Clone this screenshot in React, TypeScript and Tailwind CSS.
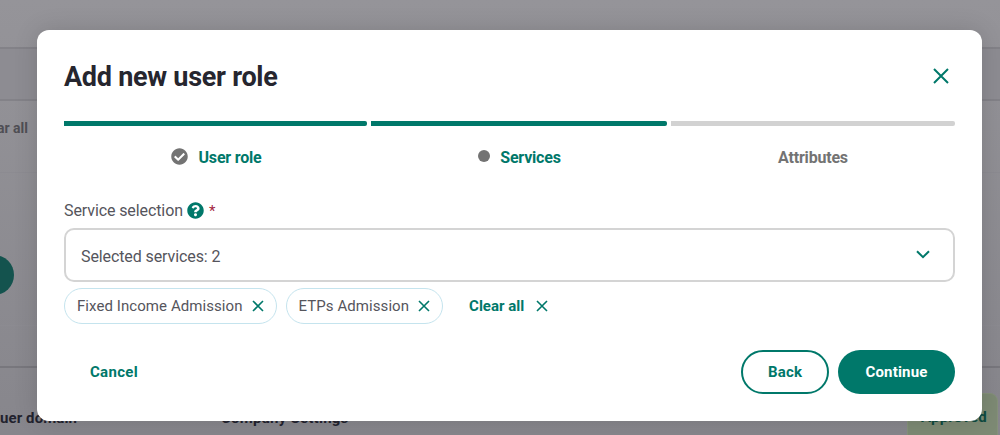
import React from "react";
import { FaCheckCircle, FaQuestionCircle } from "react-icons/fa";

function Cross({ size, width = 1.6 }: { size: number; width?: number }) {
  return (
    <svg className="shrink-0 text-[#00786a]" width={size} height={size} viewBox={`0 0 ${size} ${size}`} aria-hidden="true">
      <path d={`M1 1L${size - 1} ${size - 1}M${size - 1} 1L1 ${size - 1}`} fill="none" stroke="currentColor" strokeWidth={width} />
    </svg>
  );
}

function Chip({ label }: { label: string }) {
  return (
    <div className="flex h-[36px] items-center gap-[9px] rounded-full border border-[#c5e4ee] pl-[12px] pr-[12px] text-[15px] tracking-[0.07px] text-[#55555c]">
      <span>{label}</span>
      <Cross size={12} />
    </div>
  );
}

export default function App() {
  return (
    <div className="relative h-[435px] w-[1000px] overflow-hidden bg-gradient-to-b from-[#959499] to-[#87868c] font-['Roboto',sans-serif]">
      {/* page behind the dialog */}
      <div className="flex h-full flex-col">
        <div className="h-[47px] shrink-0" />
        <div className="h-[54px] shrink-0 border-y-2 border-[#838288] bg-[#8d8c92]" />
        <div className="flex h-[72px] shrink-0 items-center border-b border-[#8c8b91] pb-[16px]">
          <span className="ml-[-3px] whitespace-nowrap text-[14px] font-bold text-[#4f4e54]">ar all</span>
        </div>
        <div className="flex h-[152px] shrink-0 items-center">
          <div className="ml-[-26px] mt-[52px] h-[40px] w-[40px] rounded-full bg-[#14534e]" />
        </div>
        <div className="h-[41px] shrink-0 border-t border-[#8c8b91]" />
        <div className="flex flex-1 justify-between border-t-2 border-[#78777d] pt-[39px]">
          <div className="flex text-[15px] font-bold text-[#22222e]">
            <span className="w-[221px] whitespace-nowrap tracking-[0.1px]">uer domain</span>
            <span className="whitespace-nowrap tracking-[0.25px]">Company Settings</span>
          </div>
          <div className="mr-[2px] mt-[-14px] h-[60px] w-[91px] rounded-l-[6px] rounded-tr-[8px] border border-[#85917a] bg-[#7d8a74] pl-[13px] pt-[12px] text-[15px] font-bold tracking-[0.2px] text-[#0f4a3f]">Approved</div>
        </div>
      </div>

      {/* dialog */}
      <div className="absolute left-[37px] top-[30px] flex h-[391px] w-[945px] flex-col rounded-[12px] bg-white px-[27px] shadow-[0_0_24px_rgba(0,0,0,0.14)]">
        <div className="flex h-[91px] shrink-0 items-center justify-between pt-[3px]">
          <h1 className="text-[27px] font-bold leading-none tracking-[-0.27px] text-[#26262f]">Add new user role</h1>
          <div className="mr-[6px] mt-[-3px]"><Cross size={16} width={2} /></div>
        </div>
        <div className="flex gap-[4px]">
          <div className="h-[5px] w-[303px] rounded-r-[2px] bg-[#00786a]" />
          <div className="h-[5px] w-[296px] rounded-r-[2px] bg-[#00786a]" />
          <div className="h-[5px] flex-1 rounded-r-[2px] bg-[#d2d2d2]" />
        </div>
        <div className="mt-[10px] flex h-[43px] items-center text-[16px] font-bold tracking-[-0.2px]">
          <div className="flex w-[307px] items-center justify-center gap-[11px] pr-[3px] text-[#00786a]">
            <FaCheckCircle className="mt-[-2px] h-[17px] w-[17px] text-[#737373]" />
            <span>User role</span>
          </div>
          <div className="flex w-[300px] items-center justify-center gap-[10px] pr-[3px] text-[#00786a]">
            <span className="mt-[-3px] h-[12px] w-[12px] rounded-full bg-[#737373]" />
            <span>Services</span>
          </div>
          <div className="flex flex-1 justify-center text-[#737373]">Attributes</div>
        </div>
        <div className="mt-[22px] flex h-[20px] items-center text-[16px] tracking-[-0.1px] text-[#55555c]">
          <span>Service selection</span>
          <FaQuestionCircle className="ml-[4px] mt-[-2px] h-[17px] w-[17px] text-[#00786a]" />
          <span className="ml-[5px] text-[15px] text-[#a3263f]">*</span>
        </div>
        <div className="mt-[7px] flex h-[54px] shrink-0 items-center justify-between rounded-[10px] border-2 border-[#d4d4d4] pl-[15px] pr-[23px] text-[16px] tracking-[-0.1px] text-[#55555c]">
          <span className="pt-[3px]">Selected services: 2</span>
          <svg width="14" height="9" viewBox="0 0 14 9" aria-hidden="true" className="mt-[-1px] text-[#00786a]">
            <path d="M1 1.2L7 7.2L13 1.2" fill="none" stroke="currentColor" strokeWidth="2" />
          </svg>
        </div>
        <div className="mt-[6px] flex items-center">
          <Chip label="Fixed Income Admission" />
          <div className="ml-[9px]"><Chip label="ETPs Admission" /></div>
          <span className="ml-[26px] text-[15px] font-bold text-[#00786a]">Clear all</span>
          <div className="ml-[12px]"><Cross size={12} /></div>
        </div>
        <div className="mt-[26px] flex items-center justify-between">
          <span className="pl-[26px] text-[15px] font-bold tracking-[0.3px] text-[#00786a]">Cancel</span>
          <div className="flex gap-[9px]">
            <div className="flex h-[44px] w-[88px] items-center justify-center rounded-full border-2 border-[#00786a] text-[15px] font-bold tracking-[0.2px] text-[#00786a]">Back</div>
            <div className="flex h-[44px] w-[117px] items-center justify-center rounded-full bg-[#00786a] text-[15px] font-bold tracking-[0.2px] text-white">Continue</div>
          </div>
        </div>
      </div>
    </div>
  );
}
